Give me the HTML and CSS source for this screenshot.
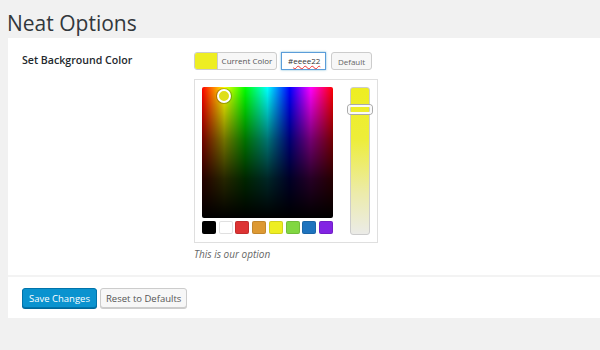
FILE: index.html
```html
<!DOCTYPE html>
<html lang="en">
<head>
  <meta charset="UTF-8" />
  <title>Neat Options</title>
  <link rel="stylesheet" href="styles.css">
</head>
<body>
  <h1 class="page-title">Neat Options</h1>

  <div class="panel">
    <div class="field-row">
      <div class="field-label">Set Background Color</div>
      <div class="field-body">
        <div class="color-controls">
          <button class="color-result">
            <span class="color-current"></span>
            <span class="color-result-text">Current Color</span>
          </button>
          <div class="hex-input">#<span class="misspelt">eeee22</span></div>
          <button class="btn-small">Default</button>
        </div>

        <div class="picker">
          <div class="picker-main">
            <div class="spectrum"><span class="marker"></span></div>
            <div class="palette">
              <span class="chip" style="background:#000000"></span>
              <span class="chip" style="background:#ffffff"></span>
              <span class="chip" style="background:#dd3333"></span>
              <span class="chip" style="background:#dd9933"></span>
              <span class="chip" style="background:#eeee22"></span>
              <span class="chip" style="background:#81d742"></span>
              <span class="chip" style="background:#1e73be"></span>
              <span class="chip" style="background:#8224e3"></span>
            </div>
          </div>
          <div class="strip"><span class="strip-handle"></span></div>
        </div>

        <p class="description">This is our option</p>
      </div>
    </div>

    <div class="submit-row">
      <button class="btn btn-primary">Save Changes</button>
      <button class="btn">Reset to Defaults</button>
    </div>
  </div>
</body>
</html>
```

FILE: styles.css
```css
body {
  margin: 0;
  background: #f1f1f1;
  font-family: 'Open Sans', 'Liberation Sans', sans-serif;
  color: #444;
}

.page-title {
  margin: 8px 0 0 7px;
  font-size: 21px;
  line-height: 30px;
  font-weight: 400;
  color: #32373c;
}

.panel {
  margin-left: 8px;
  background: #fff;
}

.field-row {
  display: flex;
  padding: 14px 0 14px 14px;
  border-bottom: 2px solid #f3f3f3;
}

.field-label {
  width: 172px;
  padding-top: 1px;
  font-size: 10.6px;
  font-weight: 600;
  line-height: 14px;
  color: #23282d;
}

.color-controls {
  display: flex;
  align-items: center;
  gap: 4px;
  height: 18px;
}

.color-result {
  display: flex;
  align-items: stretch;
  height: 18px;
  width: 83px;
  padding: 0;
  border: 1px solid #ccc;
  border-radius: 3px;
  background: #f7f7f7;
  overflow: hidden;
  font-family: inherit;
}

.color-current {
  width: 22px;
  background: #eeee22;
  border-right: 1px solid #ccc;
}

.color-result-text {
  flex: 1;
  font-size: 8px;
  line-height: 16px;
  color: #555;
  text-align: center;
}

.hex-input {
  box-sizing: border-box;
  width: 45px;
  height: 18px;
  border: 1px solid #5b9dd9;
  box-shadow: 0 0 2px rgba(30, 140, 190, .6);
  font-size: 8px;
  line-height: 16px;
  padding-left: 6px;
  color: #333;
}

.misspelt {
  text-decoration: underline wavy #e33;
  text-decoration-thickness: 1px;
}

.btn-small {
  box-sizing: border-box;
  margin-left: 1px;
  width: 41px;
  height: 18px;
  padding: 0;
  border: 1px solid #ccc;
  border-radius: 3px;
  background: #f7f7f7;
  font-family: inherit;
  font-size: 8px;
  color: #666;
}

.picker {
  display: flex;
  width: fit-content;
  margin-top: 9px;
  padding: 7px;
  border: 1px solid #dfdfdf;
}

.picker-main {
  display: flex;
  flex-direction: column;
  gap: 3px;
}

.spectrum {
  position: relative;
  width: 131px;
  height: 131px;
  border-radius: 2px;
  background:
    linear-gradient(to bottom, rgba(0, 0, 0, 0), rgba(0, 0, 0, .55) 40%, rgba(0, 0, 0, .85) 70%, #000),
    linear-gradient(to right, #f00 0%, #ff0 17%, #0f0 33%, #0ff 50%, #00f 67%, #f0f 83%, #f00 100%);
}

.marker {
  position: absolute;
  left: 15px;
  top: 2px;
  box-sizing: border-box;
  width: 14px;
  height: 14px;
  border: 2px solid #fff;
  border-radius: 50%;
  background: #dede18;
  box-shadow: 0 0 0 1px rgba(0, 0, 0, .25);
}

.palette {
  display: flex;
  justify-content: space-between;
}

.chip {
  width: 14px;
  height: 13px;
  border-radius: 2px;
  box-shadow: inset 0 0 0 1px rgba(0, 0, 0, .12);
}

.strip {
  position: relative;
  box-sizing: border-box;
  margin-left: 17px;
  width: 20px;
  height: 148px;
  border: 1px solid #ccc;
  border-radius: 3px;
  background: linear-gradient(to bottom, #eeee22, #eded3a 35%, #ecebaa 72%, #ebebe8);
}

.strip-handle {
  position: absolute;
  left: -3px;
  top: 17px;
  box-sizing: border-box;
  width: 24px;
  height: 9px;
  border: 2px solid #fafafa;
  border-radius: 3px;
  box-shadow: 0 0 0 1px #aaa;
}

.description {
  margin: 4px 0 0;
  font-size: 10px;
  line-height: 14px;
  font-style: italic;
  color: #666;
}

.submit-row {
  display: flex;
  gap: 3px;
  padding: 11px 0 10px 14px;
}

.btn {
  box-sizing: border-box;
  height: 20px;
  padding: 0 5px;
  border: 1px solid #ccc;
  border-radius: 3px;
  background: #f7f7f7;
  box-shadow: 0 1px 0 #ccc;
  font-family: inherit;
  font-size: 9.5px;
  color: #555;
}

.btn-primary {
  padding: 0 6px;
  border-color: #0073aa;
  background: #0a93cf;
  box-shadow: 0 1px 0 #006799;
  color: #fff;
}
```
